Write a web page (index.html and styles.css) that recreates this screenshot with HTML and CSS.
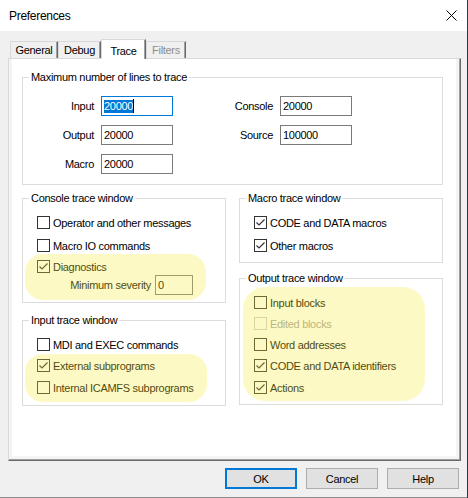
FILE: index.html
```html
<!DOCTYPE html>
<html>
<head>
<meta charset="utf-8">
<title>Preferences</title>
<link rel="stylesheet" href="styles.css">
</head>
<body>
<div class="window">
  <div class="titlebar">
    <span class="title">Preferences</span>
    <svg class="close" viewBox="0 0 11 11" width="11" height="11"><path d="M0.5 0.5 L10.5 10.5 M10.5 0.5 L0.5 10.5" stroke="#000" stroke-width="1" fill="none"/></svg>
  </div>
  <div class="client">
    <div class="tabs">
      <div class="tab t-general">General</div>
      <div class="tab t-debug">Debug</div>
      <div class="tab t-trace selected">Trace</div>
      <div class="tab t-filters disabled">Filters</div>
    </div>
    <div class="panel">
      <fieldset class="group g-lines">
        <legend>Maximum number of lines to trace</legend>
        <div class="lines-grid">
          <span class="lbl">Input</span>
          <div class="tb focused"><span class="sel">20000</span><span class="caret"></span></div>
          <span class="lbl">Console</span>
          <div class="tb">20000</div>
          <span class="lbl">Output</span>
          <div class="tb">20000</div>
          <span class="lbl">Source</span>
          <div class="tb">100000</div>
          <span class="lbl">Macro</span>
          <div class="tb">20000</div>
        </div>
      </fieldset>
      <div class="columns">
        <div class="col">
          <fieldset class="group g-console">
            <legend>Console trace window</legend>
            <div class="cb"><span class="box"></span><span>Operator and other messages</span></div>
            <div class="cb mt6"><span class="box"></span><span>Macro IO commands</span></div>
            <div class="cb"><span class="box"><svg viewBox="0 0 11 11" width="11" height="11"><path d="M1.5 5.5 L4 8 L9.5 2.5" stroke="#333" stroke-width="1.2" fill="none"/></svg></span><span>Diagnostics</span></div>
            <div class="sev"><span class="lbl">Minimum severity</span><div class="tb small">0</div></div>
          </fieldset>
          <fieldset class="group g-input">
            <legend>Input trace window</legend>
            <div class="cb"><span class="box"></span><span>MDI and EXEC commands</span></div>
            <div class="cb"><span class="box"><svg viewBox="0 0 11 11" width="11" height="11"><path d="M1.5 5.5 L4 8 L9.5 2.5" stroke="#333" stroke-width="1.2" fill="none"/></svg></span><span>External subprograms</span></div>
            <div class="cb mt5"><span class="box"></span><span>Internal ICAMFS subprograms</span></div>
          </fieldset>
        </div>
        <div class="col">
          <fieldset class="group g-macro">
            <legend>Macro trace window</legend>
            <div class="cb"><span class="box"><svg viewBox="0 0 11 11" width="11" height="11"><path d="M1.5 5.5 L4 8 L9.5 2.5" stroke="#333" stroke-width="1.2" fill="none"/></svg></span><span>CODE and DATA macros</span></div>
            <div class="cb mt6"><span class="box"><svg viewBox="0 0 11 11" width="11" height="11"><path d="M1.5 5.5 L4 8 L9.5 2.5" stroke="#333" stroke-width="1.2" fill="none"/></svg></span><span>Other macros</span></div>
          </fieldset>
          <fieldset class="group g-output">
            <legend>Output trace window</legend>
            <div class="cb"><span class="box"></span><span>Input blocks</span></div>
            <div class="cb disabled"><span class="box"></span><span>Edited blocks</span></div>
            <div class="cb"><span class="box"></span><span>Word addresses</span></div>
            <div class="cb"><span class="box"><svg viewBox="0 0 11 11" width="11" height="11"><path d="M1.5 5.5 L4 8 L9.5 2.5" stroke="#333" stroke-width="1.2" fill="none"/></svg></span><span>CODE and DATA identifiers</span></div>
            <div class="cb mt5"><span class="box"><svg viewBox="0 0 11 11" width="11" height="11"><path d="M1.5 5.5 L4 8 L9.5 2.5" stroke="#333" stroke-width="1.2" fill="none"/></svg></span><span>Actions</span></div>
          </fieldset>
        </div>
      </div>
      <div class="hl hl1"></div>
      <div class="hl hl2"></div>
      <div class="hl hl3"></div>
    </div>
    <div class="buttons">
      <button class="btn default">OK</button>
      <button class="btn">Cancel</button>
      <button class="btn">Help</button>
    </div>
  </div>
</div>
</body>
</html>
```

FILE: styles.css
```css
* { box-sizing: border-box; }
html, body { margin: 0; padding: 0; }
body {
  background: #1d3d4c;
  width: 468px;
  height: 498px;
  overflow: hidden;
  font-family: "Liberation Sans", Arial, sans-serif;
  font-size: 11px;
  letter-spacing: -0.3px;
  color: #000;
}
.window {
  width: 467px;
  height: 498px;
  background: #f0f0f0;
  border-bottom: 1px solid #8c8c8c;
}
.titlebar {
  height: 31px;
  background: #fff;
  display: flex;
  align-items: center;
  justify-content: space-between;
  padding: 0 10px 0 9px;
}
.title { font-size: 12px; }
.close { display: block; }
.client { padding: 8px 6px 0 8px; }
.tabs {
  display: flex;
  align-items: flex-end;
  height: 19px;
  padding-left: 2px;
  position: relative;
  z-index: 1;
}
.tab {
  height: 17px;
  background: #f0f0f0;
  border-top: 1px solid #d9d9d9;
  border-left: 1px solid #d9d9d9;
  border-right: 1px solid #696969;
  box-shadow: inset -1px 0 0 #a0a0a0;
  text-align: center;
  line-height: 16px;
}
.t-general { width: 48px; }
.t-debug { width: 43px; }
.t-trace { width: 45px; }
.t-filters { width: 40px; }
.tab.selected {
  height: 20px;
  background: #fff;
  margin-bottom: -1px;
  padding-top: 3px;
}
.tab.disabled { color: #8d8d8d; }
.panel {
  position: relative;
  height: 403px;
  background: #fff;
  border: 1px solid;
  border-color: #d9d9d9 #696969 #696969 #d9d9d9;
  box-shadow: inset -1px -1px 0 #a0a0a0, inset 3px 0 0 #f4f4f4, inset -4px -4px 0 #f4f4f4;
  padding: 11px 0 0 13px;
}
.group {
  margin: 0;
  min-width: 0;
  border: 1px solid #dcdcdc;
  padding: 9px 0 0 6px;
}
.group legend {
  padding: 0 2px;
  line-height: 14px;
}
.g-lines { width: 421px; height: 115px; padding-top: 12px; }
.lines-grid {
  display: grid;
  grid-template-columns: 65px 72px 93px 72px;
  grid-auto-rows: 20px;
  column-gap: 7px;
  row-gap: 9px;
  align-items: center;
}
.lbl { text-align: right; }
.tb {
  height: 20px;
  border: 1px solid #7a7a7a;
  background: #fff;
  padding: 0 2px;
  display: flex;
  align-items: center;
  white-space: nowrap;
}
.tb.focused { border-color: #0078d7; }
.sel {
  background: #0078d7;
  color: #fff;
  height: 13px;
  line-height: 13px;
}
.caret { width: 1px; height: 14px; background: #000; }
.columns {
  display: grid;
  grid-template-columns: 204px 204px;
  column-gap: 13px;
  margin-top: 6px;
}
.col { display: flex; flex-direction: column; }
.g-console { height: 112px; }
.g-input { height: 93px; margin-top: 10px; }
.g-macro { height: 72px; }
.g-output { height: 134px; margin-top: 8px; }
.cb {
  display: flex;
  align-items: center;
  height: 17px;
  margin-left: 8px;
  white-space: nowrap;
}
.cb + .cb { margin-top: 4px; }
.cb.mt6 { margin-top: 6px; }
.cb.mt5 { margin-top: 5px; }
.box {
  width: 13px;
  height: 13px;
  border: 1px solid #333;
  background: #fff;
  margin-right: 3px;
  flex: none;
  display: flex;
}
.box svg { display: block; }
.cb.disabled { color: #a0a0a0; }
.cb.disabled .box { border-color: #cccccc; }
.sev {
  display: grid;
  grid-template-columns: 122px 38px;
  column-gap: 4px;
  align-items: center;
  height: 20px;
}
.hl {
  position: absolute;
  background: rgba(248, 235, 60, 0.3);
  pointer-events: none;
}
.hl1 { left: 16px; top: 195px; width: 181px; height: 46px; border-radius: 18px; }
.hl2 { left: 16px; top: 295px; width: 182px; height: 48px; border-radius: 18px; }
.hl3 { left: 234px; top: 228px; width: 182px; height: 114px; border-radius: 22px; }
.buttons {
  display: flex;
  justify-content: flex-end;
  gap: 9px;
  margin-top: 7px;
  padding-right: 2px;
}
.btn {
  width: 72px;
  height: 21px;
  background: #e1e1e1;
  border: 1px solid #adadad;
  font-family: inherit;
  font-size: 11px;
  letter-spacing: -0.3px;
  color: #000;
  padding: 0;
  margin: 0;
}
.btn.default { border: 2px solid #0078d7; }
```
